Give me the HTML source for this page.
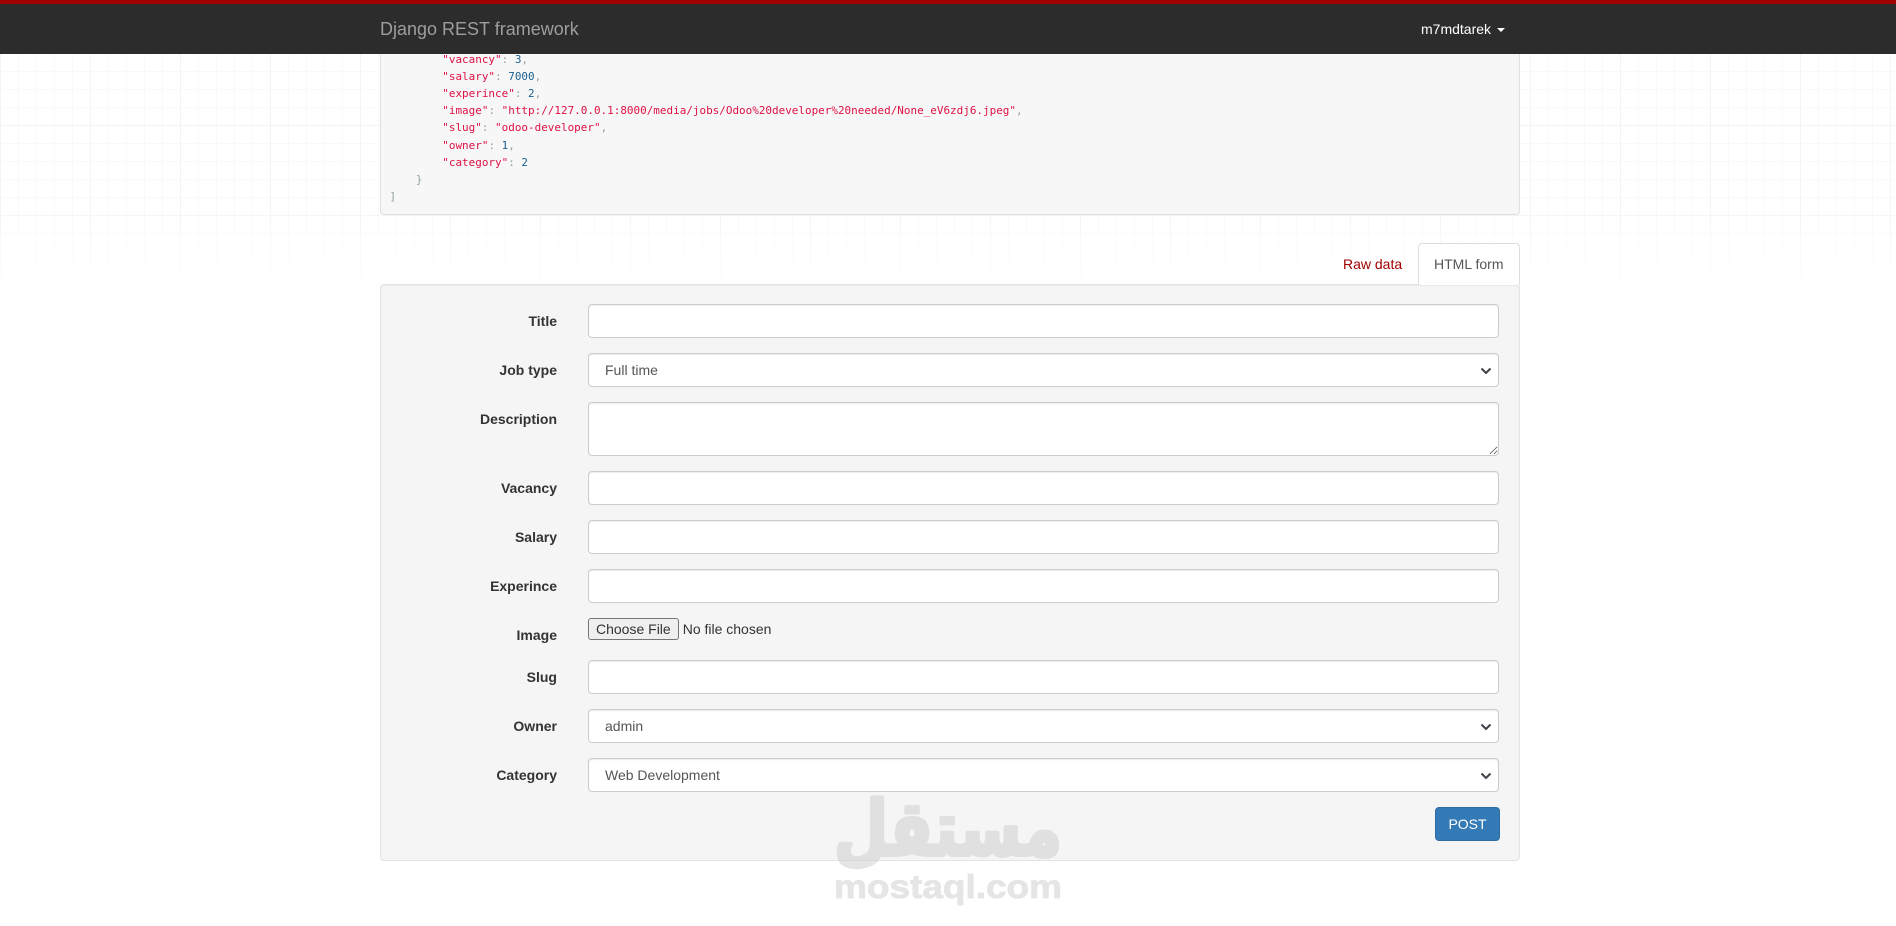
<!DOCTYPE html>
<html lang="en">
<head>
<meta charset="utf-8">
<title>Django REST framework</title>
<style>
*{box-sizing:border-box}
html,body{margin:0;padding:0;width:1896px;height:926px;overflow:hidden;background:#fff;font-family:"Liberation Sans",Arial,sans-serif;font-size:14px;line-height:20px;color:#333}
.grid{position:absolute;left:0;top:0;width:1896px;height:300px;background-image:linear-gradient(to right,#f4f4f4 1px,transparent 1px),linear-gradient(to bottom,#f4f4f4 1px,transparent 1px),linear-gradient(to right,#f9f9f9 1px,transparent 1px),linear-gradient(to bottom,#f9f9f9 1px,transparent 1px);background-size:90px 90px,90px 90px,18px 18px,18px 18px;background-position:0 0,0 35px,0 0,0 17px}
.fade{position:absolute;left:0;top:205px;width:1896px;height:92px;background:linear-gradient(to bottom,rgba(255,255,255,0),#fff)}
.fade2{position:absolute;left:0;top:297px;width:1896px;height:6px;background:#fff}
nav{position:absolute;left:0;top:0;width:1896px;height:54px;background:#2c2c2c;border-top:4px solid #a30000;z-index:5}
.brand{position:absolute;left:380px;top:0;line-height:50px;font-size:18px;color:#9d9d9d;white-space:nowrap}
.user{position:absolute;left:1421px;top:0;line-height:50px;color:#fff;white-space:nowrap}
.caret{position:absolute;left:1497px;top:24px;width:0;height:0;border-top:4px solid #fff;border-left:4px solid transparent;border-right:4px solid transparent}
pre{position:absolute;left:380px;top:44px;width:1140px;height:171px;margin:0;padding:5.8px 0 0 8.5px;background:#f7f7f7;border:1px solid #e0e0e0;border-radius:4px;font-family:"DejaVu Sans Mono","Liberation Mono",monospace;font-size:10.96px;line-height:17.14px;color:#93a1a1;overflow:hidden}
.s{color:#d14}.n{color:#195f91}
.tab{position:absolute;white-space:nowrap}
.raw{left:1343px;top:254px;color:#a30000}
.html{left:1418px;top:243px;width:102px;height:42px;padding:10px 15px;background:#fff;border:1px solid #ddd;border-bottom:0;border-radius:4px 4px 0 0;color:#555;z-index:2}
.well{position:absolute;left:380px;top:284px;width:1140px;height:577px;background:#f5f5f5;border:1px solid #e3e3e3;border-radius:4px;box-shadow:inset 0 1px 1px rgba(0,0,0,.05)}
label{position:absolute;right:1339px;font-weight:bold;white-space:nowrap;color:#333}
.fc{position:absolute;left:588px;width:911px;height:34px;padding:6px 12px;margin:0;font-family:"Liberation Sans",Arial,sans-serif;font-size:14px;line-height:20px;color:#555;background:#fff;border:1px solid #ccc;border-radius:4px;box-shadow:inset 0 1px 1px rgba(0,0,0,.075);display:block;outline:0}
select.fc{-webkit-appearance:none;appearance:none;padding-left:16px}
textarea.fc{height:54px;resize:vertical}
input[type=file]{position:absolute;left:588px;top:618px;width:911px;height:22px;margin:0;padding:0;font-family:"Liberation Sans",Arial,sans-serif;font-size:14px;line-height:20px;color:#333}
input[type=file]::file-selector-button{background:#efefef;border:1px solid #767676;border-radius:3px;color:#333;height:22px;padding:1px 7px}
svg.chev{position:absolute;left:1480px;width:12px;height:8px}
button{position:absolute;left:1435px;top:807px;width:65px;height:34px;margin:0;padding:0;background:#337ab7;border:1px solid #2e6da4;border-radius:4px;color:#fff;font-family:"Liberation Sans",Arial,sans-serif;font-size:14px;line-height:20px}
svg.wm{position:absolute;left:0;top:0;z-index:6;pointer-events:none}
</style>
</head>
<body>
<div class="grid"></div>
<div class="fade"></div>
<div class="fade2"></div>

<nav>
  <div class="brand">Django REST framework</div>
  <div class="user">m7mdtarek</div>
  <div class="caret"></div>
</nav>

<pre>        <span class="s">"vacancy"</span>: <span class="n">3</span>,
        <span class="s">"salary"</span>: <span class="n">7000</span>,
        <span class="s">"experince"</span>: <span class="n">2</span>,
        <span class="s">"image"</span>: <span class="s">"http://127.0.0.1:8000/media/jobs/Odoo%20developer%20needed/None_eV6zdj6.jpeg"</span>,
        <span class="s">"slug"</span>: <span class="s">"odoo-developer"</span>,
        <span class="s">"owner"</span>: <span class="n">1</span>,
        <span class="s">"category"</span>: <span class="n">2</span>
    }
]</pre>

<div class="tab raw">Raw data</div>
<div class="tab html">HTML form</div>
<div class="well"></div>

<label style="top:311px">Title</label>
<input class="fc" type="text" style="top:304px">

<label style="top:360px">Job type</label>
<select class="fc" style="top:353px"><option>Full time</option></select>
<svg class="chev" style="top:367px" viewBox="0 0 12 8"><path d="M1.5 1.5 L6 6 L10.5 1.5" fill="none" stroke="#3f3f4a" stroke-width="2"/></svg>

<label style="top:409px">Description</label>
<textarea class="fc" style="top:402px"></textarea>

<label style="top:478px">Vacancy</label>
<input class="fc" type="text" style="top:471px">

<label style="top:527px">Salary</label>
<input class="fc" type="text" style="top:520px">

<label style="top:576px">Experince</label>
<input class="fc" type="text" style="top:569px">

<label style="top:625px">Image</label>
<input type="file">

<label style="top:667px">Slug</label>
<input class="fc" type="text" style="top:660px">

<label style="top:716px">Owner</label>
<select class="fc" style="top:709px"><option>admin</option></select>
<svg class="chev" style="top:723px" viewBox="0 0 12 8"><path d="M1.5 1.5 L6 6 L10.5 1.5" fill="none" stroke="#3f3f4a" stroke-width="2"/></svg>

<label style="top:765px">Category</label>
<select class="fc" style="top:758px"><option>Web Development</option></select>
<svg class="chev" style="top:772px" viewBox="0 0 12 8"><path d="M1.5 1.5 L6 6 L10.5 1.5" fill="none" stroke="#3f3f4a" stroke-width="2"/></svg>

<button type="button">POST</button>

<svg class="wm" width="1896" height="926" viewBox="0 0 1896 926">
  <g opacity=".55" fill="#d0d0d0" stroke="#d0d0d0" stroke-linejoin="round" stroke-linecap="round">
    <text x="834" y="855" font-family="'DejaVu Sans',sans-serif" font-weight="bold" font-size="76" textLength="228" lengthAdjust="spacingAndGlyphs" stroke-width="4" style="direction:rtl" text-anchor="end">مستقل</text>
    <text x="834" y="898" font-family="'Liberation Sans',sans-serif" font-weight="bold" font-size="33" textLength="228" lengthAdjust="spacingAndGlyphs" stroke-width=".8">mostaql.com</text>
  </g>
</svg>
</body>
</html>
